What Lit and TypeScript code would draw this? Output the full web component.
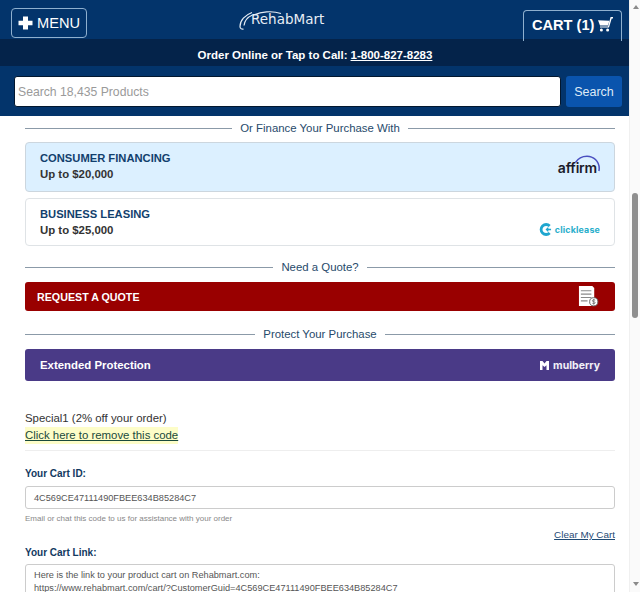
import { LitElement, html, css } from "lit";
import { customElement } from "lit/decorators.js";

@customElement("app-root")
export class AppRoot extends LitElement {
  static styles = css`
    :host { display: block; width: 640px; height: 592px; overflow: hidden; background: #fff; font-family: "Liberation Sans", Arial, sans-serif; color: #333; }
    * { box-sizing: border-box; }
    .page { display: flex; height: 592px; }
    .main { width: 629px; flex: none; height: 592px; overflow: hidden; }
    .sb { flex: 1; background: #fafafa; border-left: 1px solid #f0f0f0; display: flex; flex-direction: column; align-items: center; padding-top: 193px; position: relative; }
    .thumb { width: 6px; height: 125px; background: #8f8f8f; border-radius: 3px; }
    .arr { position: absolute; left: 3px; width: 0; height: 0; border-left: 3.5px solid transparent; border-right: 3.5px solid transparent; }
    .arr.up { top: 5px; border-bottom: 4px solid #8a8a8a; }
    .arr.down { bottom: 6px; border-top: 4px solid #8a8a8a; }

    .top { height: 39px; background: #03346b; display: flex; padding: 8px 7px 0 11px; }
    .menu { width: 76px; height: 30px; border: 1px solid #8fb0cf; border-radius: 4px; color: #fff; display: flex; align-items: center; gap: 4px; padding-left: 6px; font-size: 14.6px; }
    .logo { display: flex; align-items: center; margin-top: -8px; height: 39px; margin-left: 152px; color: #e8eef5; font-family: "DejaVu Sans", sans-serif; font-size: 13.5px; position: relative; padding-bottom: 1px; }
    .arc { position: absolute; left: 13px; top: 10px; }
    .logo svg.sw { margin-right: -2px; margin-top: 3px; }
    .cart { width: 99px; height: 31px; margin-top: 2px; margin-left: auto; border: 1px solid #8fb0cf; border-bottom: none; border-radius: 4px 4px 0 0; color: #fff; display: flex; align-items: center; gap: 4px; padding: 0 0 3px 8px; font-size: 14.6px; font-weight: 700; white-space: nowrap; }
    .call { height: 27px; background: #04234a; color: #fff; display: flex; align-items: center; justify-content: center; font-size: 11.5px; font-weight: 700; gap: 3px; padding-top: 4px; padding-left: 1px; }
    .call u { text-underline-offset: 1px; }
    .search { height: 50px; background: #03346b; display: flex; gap: 5px; padding: 10px 7px 0 14px; }
    .input { flex: 1; height: 31px; background: #fff; border: 1px solid #02172f; border-radius: 3px; color: #9a9a9a; font-size: 12.2px; display: flex; align-items: center; padding-left: 3px; }
    .sbtn { width: 56px; height: 31px; background: #0a54ad; border-radius: 3px; color: #dfeaf6; font-size: 12.5px; display: flex; align-items: center; justify-content: center; }

    .body { padding: 5px 14px 0 25px; }
    .hd { display: flex; align-items: center; gap: 8px; height: 14px; font-size: 11.4px; color: #274a6b; white-space: nowrap; }
    .hd::before, .hd::after { content: ""; flex: 1; height: 1px; background: #8b9aa8; }
    .box { border: 1px solid #ccd6de; border-radius: 4px; display: flex; justify-content: space-between; align-items: flex-start; padding: 8px 14px 0 14px; font-weight: 700; line-height: 15.5px; }
    .t { color: #123f6d; font-size: 11.2px; }
    .s { color: #333; font-size: 11.4px; }
    .fin { height: 50px; margin-top: 7px; background: #dcf0ff; }
    .lease { height: 48px; margin-top: 6px; background: #fff; border-color: #dfe3e6; }
    .aff { display: flex; flex-direction: column; align-items: flex-end; margin-top: 3px; position: relative; font-family: "Inter", sans-serif; color: #1b1b2b; font-size: 14px; letter-spacing: -0.2px; font-weight: 600; line-height: 16px; padding-right: 3px; }
    .aff svg { position: absolute; right: -1px; top: 1px; }
    .aff span { padding-top: 6px; }
    .cl { display: flex; align-items: center; gap: 3px; margin: 15px 0 0; color: #27aecb; font-family: "Inter", sans-serif; font-size: 8.8px; font-weight: 700; letter-spacing: 0.2px; }
    .quote { height: 29px; margin-top: 8px; background: #990000; border-radius: 3px; color: #fff; display: flex; justify-content: space-between; align-items: center; padding: 0 16px 0 12px; font-size: 10.7px; font-weight: 700; }
    .hd.q { margin-top: 14px; }
    .hd.p { margin-top: 16px; }
    .mul { height: 32px; margin-top: 8px; background: #4a3a87; border-radius: 3px; color: #fff; display: flex; justify-content: space-between; align-items: center; padding: 0 15px; font-size: 11.4px; font-weight: 700; }
    .mb { display: flex; align-items: center; gap: 4px; font-family: "Inter", sans-serif; font-size: 10.5px; font-weight: 700; color: #f2f0f8; }
    .sp { margin-top: 29px; font-size: 11.4px; line-height: 17px; color: #333; }
    .rm { color: #1a4a3c; text-decoration: underline; background: #fdfdc8; display: inline-block; font-size: 11.4px; }
    hr { border: 0; border-top: 1px solid #eee; margin: 6px 0 0; }
    .lb { font-size: 10px; font-weight: 700; color: #12395f; margin-top: 16px; line-height: 13px; }
    .field { height: 23px; margin-top: 6px; border: 1px solid #ccc; border-radius: 3px; font-size: 9.2px; color: #555; display: flex; align-items: center; padding-left: 8px; }
    .hint { font-size: 8px; color: #888; margin-top: 4px; line-height: 11px; }
    .clear { text-align: right; margin-top: 4px; font-size: 9.9px; line-height: 14px; color: #1f4a74; text-decoration: underline; }
    .lb.lb2 { margin-top: 4px; }
    .ta { height: 40px; margin-top: 5px; border: 1px solid #ccc; border-radius: 3px; font-size: 9.2px; color: #555; padding: 4px 8px 0; line-height: 13px; white-space: nowrap; overflow: hidden; }
  `;

  render() {
    return html`<div class="page">
      <div class="main">
        <div class="top">
          <div class="menu">
            <svg width="15" height="14" viewBox="0 0 15 15" preserveAspectRatio="none"><path d="M5 0.5h5v4.5h4.5v5H10v4.5H5V10H0.5V5H5z" fill="#fff"/></svg>
            <span>MENU</span>
          </div>
          <div class="logo">
            <svg class="sw" width="14" height="20" viewBox="0 0 14 20" fill="none" stroke="#e6edf5" stroke-width="1.2"><path d="M13 1.5C6 4 1 9.5 1 15.5c0 1.8 1.5 3 3.5 2.6"/><path d="M13.5 4C9 6 5.5 10 5 14.5"/></svg>
            <svg class="arc" width="30" height="7" viewBox="0 0 30 7" fill="none" stroke="#e6edf5" stroke-width="1.2"><path d="M1 5.5C9 1.5 20 0.5 29 3.5"/></svg>
            <span>RehabMart</span>
          </div>
          <div class="cart">
            <span>CART (1)</span>
            <svg width="15" height="15" viewBox="0 0 15 15" fill="#fff"><path d="M0 3.2 11.4 3.8 10 8.6 2 8.6z"/><path d="M12.6 0H15V1.4H13.7L11 10.6H2V9.4H10z"/><circle cx="3.4" cy="13" r="1.5"/><circle cx="9.6" cy="13" r="1.5"/></svg>
          </div>
        </div>
        <div class="call"><span>Order Online or Tap to Call:</span> <u>1-800-827-8283</u></div>
        <div class="search">
          <div class="input">Search 18,435 Products</div>
          <div class="sbtn">Search</div>
        </div>
        <div class="body">
          <div class="hd"><span>Or Finance Your Purchase With</span></div>
          <div class="box fin">
            <div><div class="t">CONSUMER FINANCING</div><div class="s">Up to $20,000</div></div>
            <div class="aff">
              <svg width="27" height="18" viewBox="0 0 27 18" fill="none"><path d="M1.5 7.5C4 3.5 8 1.2 13 1.2c6.5 0 12 5 12.2 12 0 .9-.1 1.8-.3 2.8" stroke="#4a4fc0" stroke-width="1.5"/></svg>
              <span>affirm</span>
            </div>
          </div>
          <div class="box lease">
            <div><div class="t">BUSINESS LEASING</div><div class="s">Up to $25,000</div></div>
            <div class="cl">
              <svg width="13" height="13" viewBox="0 0 14 14" fill="none"><path d="M11.5 3.2A5.4 5.4 0 1 0 11.5 10.8" stroke="#1fa6cf" stroke-width="3"/><path d="M8 7h5M10 5 8 7l2 2" stroke="#1fa6cf" stroke-width="1.4"/></svg>
              <span>clicklease</span>
            </div>
          </div>
          <div class="hd q"><span>Need a Quote?</span></div>
          <div class="quote">
            <span>REQUEST A QUOTE</span>
            <svg width="21" height="22" viewBox="0 0 22 23"><path d="M1 0H15L17 2V21H1z" fill="#fff"/><path d="M3 5H14M3 8.5H14M3 12H14M3 15.5H10" stroke="#8a8a8a" stroke-width="1.2"/><circle cx="16.5" cy="16.5" r="4.3" fill="#fff" stroke="#666"/><path d="M18 15c-1-1-3-.6-3 .6s3 .6 3 1.8-2 1.5-3 .6M16.5 13.5v6" stroke="#555" stroke-width=".7" fill="none"/></svg>
          </div>
          <div class="hd p"><span>Protect Your Purchase</span></div>
          <div class="mul">
            <span>Extended Protection</span>
            <div class="mb">
              <svg width="9" height="9" viewBox="0 0 9 9" fill="#fff"><path d="M0 0H2.5L4.5 2.5 6.5 0H9V9H6.5V4.2L4.5 6 2.5 4.2V9H0z"/></svg>
              <span>mulberry</span>
            </div>
          </div>
          <div class="sp">
            <div>Special1 (2% off your order)</div>
            <span class="rm">Click here to remove this code</span>
          </div>
          <hr />
          <div class="lb">Your Cart ID:</div>
          <div class="field">4C569CE47111490FBEE634B85284C7</div>
          <div class="hint">Email or chat this code to us for assistance with your order</div>
          <div class="clear">Clear My Cart</div>
          <div class="lb lb2">Your Cart Link:</div>
          <div class="ta">Here is the link to your product cart on Rehabmart.com:<br />https://www.rehabmart.com/cart/?CustomerGuid=4C569CE47111490FBEE634B85284C7</div>
        </div>
      </div>
      <div class="sb">
        <span class="arr up"></span>
        <div class="thumb"></div>
        <span class="arr down"></span>
      </div>
    </div>`;
  }
}
